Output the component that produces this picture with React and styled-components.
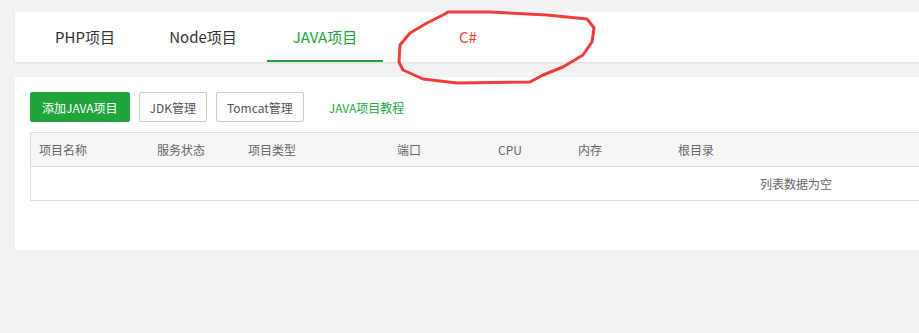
import React from "react";
import styled, { createGlobalStyle } from "styled-components";

const GlobalStyle = createGlobalStyle`
  html, body {
    margin: 0;
    padding: 0;
    background-color: #f2f2f2;
    overflow: hidden;
  }
  body {
    font-family: "Noto Sans CJK SC", "Open Sans", "Liberation Sans", sans-serif;
    color: #333;
  }
`;

const Page = styled.div`
  position: relative;
  width: 1592px;
  height: 333px;
  padding: 12px 15px 0;
  box-sizing: border-box;
`;

const TabBar = styled.div`
  display: flex;
  height: 50px;
  padding-left: 16px;
  background-color: #fff;
  box-shadow: 0 1px 2px rgba(0, 0, 0, 0.08);
`;

const Tab = styled.div`
  position: relative;
  display: flex;
  align-items: center;
  justify-content: center;
  width: ${({ w }) => w}px;
  height: 50px;
  box-sizing: border-box;
  font-size: 15px;
  color: ${({ active, red }) => (red ? "#f03d3d" : active ? "#20a53a" : "#333")};
  border-bottom: 2px solid ${({ active }) => (active ? "#20a53a" : "transparent")};
`;

const Panel = styled.div`
  margin-top: 15px;
  height: 173px;
  padding: 15px 15px 0;
  box-sizing: border-box;
  background-color: #fff;
`;

const Toolbar = styled.div`
  display: flex;
  align-items: center;
  gap: 9px;
  height: 30px;
`;

const Button = styled.button`
  height: 30px;
  padding: 0 ${({ primary }) => (primary ? 11 : 10)}px;
  border-radius: 2px;
  font-family: inherit;
  font-size: 12px;
  border: 1px solid ${({ primary }) => (primary ? "#20a53a" : "#ccc")};
  background-color: ${({ primary }) => (primary ? "#20a53a" : "#fff")};
  color: ${({ primary }) => (primary ? "#fff" : "#555")};
`;

const LinkText = styled.a`
  margin-left: 16px;
  font-size: 12px;
  color: #20a53a;
  text-decoration: none;
`;

const Table = styled.div`
  margin-top: 10px;
  border: 1px solid #ddd;
`;

const HeadRow = styled.div`
  display: flex;
  align-items: center;
  height: 33px;
  background-color: #f6f6f6;
  border-bottom: 1px solid #ddd;
`;

const HeadCell = styled.div`
  width: ${({ w }) => (w ? `${w}px` : "auto")};
  flex: ${({ w }) => (w ? "none" : 1)};
  padding-left: 8px;
  box-sizing: border-box;
  font-size: 12px;
  color: #666;
`;

const EmptyRow = styled.div`
  display: flex;
  align-items: center;
  justify-content: center;
  height: 33px;
  font-size: 12px;
  color: #666;
`;

const Scribble = styled.svg`
  position: absolute;
  left: 390px;
  top: 5px;
  overflow: visible;
`;

const tabs = [
  { label: "PHP项目", w: 108 },
  { label: "Node项目", w: 128 },
  { label: "JAVA项目", w: 116, active: true },
  { label: "C#", w: 170, red: true },
];

const columns = [
  { label: "项目名称", w: 118 },
  { label: "服务状态", w: 91 },
  { label: "项目类型", w: 149 },
  { label: "端口", w: 101 },
  { label: "CPU", w: 80 },
  { label: "内存", w: 100 },
  { label: "根目录" },
];

const App = () => (
  <Page>
    <GlobalStyle />
    <TabBar>
      {tabs.map((t) => (
        <Tab key={t.label} w={t.w} active={t.active} red={t.red}>
          {t.label}
        </Tab>
      ))}
    </TabBar>
    <Panel>
      <Toolbar>
        <Button primary>添加JAVA项目</Button>
        <Button>JDK管理</Button>
        <Button>Tomcat管理</Button>
        <LinkText href="#">JAVA项目教程</LinkText>
      </Toolbar>
      <Table>
        <HeadRow>
          {columns.map((c) => (
            <HeadCell key={c.label} w={c.w}>
              {c.label}
            </HeadCell>
          ))}
        </HeadRow>
        <EmptyRow>列表数据为空</EmptyRow>
      </Table>
    </Panel>
    <Scribble width="215" height="85" viewBox="0 0 215 85">
      <path
        d="M58 7 L100 7 L157 10 L197 14 L204 23 L202 37 L193 50 L173 62 L153 70 L140 77 L67 78 L33 74 L13 65 L9 57 L10 40 L20 28 L37 18 L53 10 Z"
        fill="none"
        stroke="#f23c3c"
        strokeWidth="3"
        strokeLinejoin="round"
      />
    </Scribble>
  </Page>
);

export default App;
